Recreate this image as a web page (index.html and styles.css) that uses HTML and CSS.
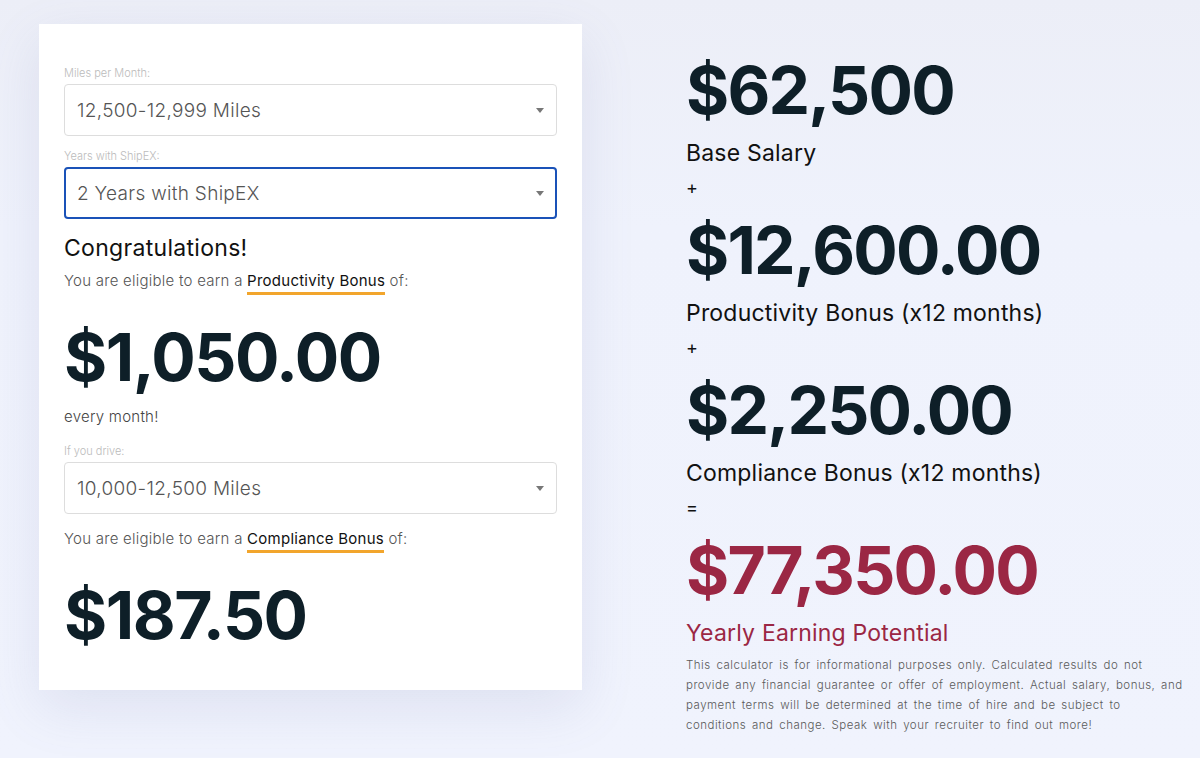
FILE: index.html
```html
<!DOCTYPE html>
<html lang="en">

<head>
    <meta charset="UTF-8">
    <meta name="viewport" content="width=device-width, initial-scale=1.0">
    <title>Earnings Calculator</title>
    <link rel="stylesheet" href="styles.css">
</head>

<body>
    <div class="page">
        <div class="card">
            <div class="field-label">Miles per Month:</div>
            <div class="select">
                <span>12,500-12,999 Miles</span>
                <svg class="arrow" width="8" height="5" viewBox="0 0 8 5"><path d="M0 0h8L4 5z" fill="#777"/></svg>
            </div>

            <div class="field-label">Years with ShipEX:</div>
            <div class="select active">
                <span>2 Years with ShipEX</span>
                <svg class="arrow" width="8" height="5" viewBox="0 0 8 5"><path d="M0 0h8L4 5z" fill="#777"/></svg>
            </div>

            <h2 class="congrats">Congratulations!</h2>
            <p class="eligible">You are eligible to earn a <span class="mark">Productivity Bonus</span> of:</p>
            <div class="amount">$1,050.00</div>
            <p class="every">every month!</p>

            <div class="field-label drive">If you drive:</div>
            <div class="select">
                <span>10,000-12,500 Miles</span>
                <svg class="arrow" width="8" height="5" viewBox="0 0 8 5"><path d="M0 0h8L4 5z" fill="#777"/></svg>
            </div>

            <p class="eligible second">You are eligible to earn a <span class="mark">Compliance Bonus</span> of:</p>
            <div class="amount">$187.50</div>
        </div>

        <div class="results">
            <div class="total">$62,500</div>
            <div class="caption">Base Salary</div>
            <div class="op">+</div>
            <div class="total">$12,600.00</div>
            <div class="caption">Productivity Bonus (x12 months)</div>
            <div class="op">+</div>
            <div class="total">$2,250.00</div>
            <div class="caption">Compliance Bonus (x12 months)</div>
            <div class="op">=</div>
            <div class="total red">$77,350.00</div>
            <div class="caption red">Yearly Earning Potential</div>
            <p class="disclaimer">This calculator is for informational purposes only. Calculated results do not provide any financial guarantee or offer of employment. Actual salary, bonus, and payment terms will be determined at the time of hire and be subject to conditions and change. Speak with your recruiter to find out more!</p>
        </div>
    </div>
</body>

</html>
```

FILE: styles.css
```css
html, body {
    height: 100%;
    margin: 0;
    padding: 0;
}

body {
    background: linear-gradient(180deg, #eceef7 0%, #eff2fc 30%, #f0f3fd 100%);
    font-family: "Inter", "Liberation Sans", sans-serif;
    color: #111;
}

.page {
    display: flex;
    align-items: flex-start;
    padding: 24px 0 0 39px;
}

/* left card with the selects */
.card {
    box-sizing: border-box;
    width: 543px;
    height: 666px;
    padding: 42px 25px 0;
    background: #fff;
    box-shadow: 0 18px 50px rgba(110, 120, 170, 0.14);
}

.field-label {
    font-size: 11px;
    line-height: 14px;
    color: #bbb;
    font-weight: 300;
    margin-bottom: 4px;
}

.select {
    box-sizing: border-box;
    height: 52px;
    display: flex;
    align-items: center;
    justify-content: space-between;
    padding: 0 12px;
    border: 1px solid #ddd;
    border-radius: 4px;
    font-size: 19px;
    letter-spacing: 0.3px;
    font-weight: 300;
    color: #555;
    margin-bottom: 13px;
}

.select.active {
    border: 2px solid #1a52b8;
    padding: 0 11px;
}

.congrats {
    margin: 14px 0 0;
    font-size: 23px;
    line-height: 30px;
    letter-spacing: 0.3px;
    font-weight: 400;
    color: #111;
}

.eligible {
    margin: 6px 0 0;
    font-size: 15px;
    line-height: 24px;
    letter-spacing: 0.25px;
    font-weight: 300;
    color: #555;
}

.eligible.second {
    margin-top: 1px;
}

.mark {
    color: #111;
    font-weight: 400;
    padding-bottom: 2px;
    border-bottom: 3px solid #f2a52c;
}

.amount {
    margin-top: 26px;
    font-size: 66px;
    line-height: 76px;
    font-weight: 700;
    letter-spacing: -1.5px;
    color: #0e1f28;
}

.every {
    margin: 10px 0 0;
    font-size: 15px;
    line-height: 24px;
    letter-spacing: 0.25px;
    font-weight: 300;
    color: #444;
}

.field-label.drive {
    margin-top: 15px;
}

/* right column with totals */
.results {
    width: 498px;
    margin-left: 104px;
    padding-top: 28px;
}

.total {
    font-size: 66px;
    line-height: 76px;
    font-weight: 700;
    letter-spacing: -1.8px;
    color: #0e1f28;
}

.caption {
    margin-top: 10px;
    font-size: 23px;
    line-height: 30px;
    letter-spacing: 0.2px;
    color: #111;
}

.op {
    margin-top: 8px;
    margin-bottom: 12px;
    font-size: 18px;
    line-height: 24px;
}

.red {
    color: #9b2744;
}

.disclaimer {
    margin: 7px 0 0;
    font-size: 11.5px;
    line-height: 20px;
    letter-spacing: 0.5px;
    word-spacing: 2px;
    color: #5a5a5a;
    font-weight: 300;
}
```
